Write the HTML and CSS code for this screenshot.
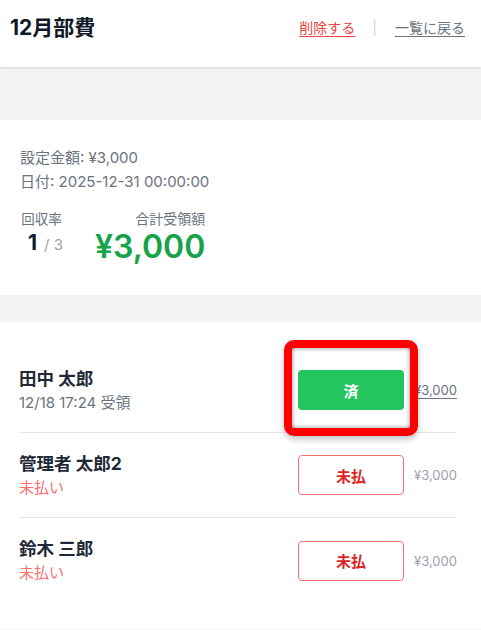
FILE: index.html
```html
<!DOCTYPE html>
<html lang="ja">
<head>
<meta charset="utf-8">
<title>12月部費</title>
<link rel="stylesheet" href="styles.css">
</head>
<body>
<header class="header">
  <h1 class="title">12月部費</h1>
  <nav class="links">
    <a class="link link-danger" href="#">削除する</a>
    <span class="sep">|</span>
    <a class="link link-muted" href="#">一覧に戻る</a>
  </nav>
</header>
<div class="spacer"></div>
<section class="card summary">
  <p class="meta">設定金額: ¥3,000</p>
  <p class="meta">日付: 2025-12-31 00:00:00</p>
  <div class="stats">
    <div class="stat stat-rate">
      <div class="stat-label">回収率</div>
      <div class="rate"><span class="rate-num">1</span><span class="rate-den">/ 3</span></div>
    </div>
    <div class="stat stat-total">
      <div class="stat-label stat-label-wide">合計受領額</div>
      <div class="total">¥3,000</div>
    </div>
  </div>
</section>
<section class="card list">
  <div class="row">
    <div class="person">
      <div class="name">田中 太郎</div>
      <div class="status">12/18 17:24 受領</div>
    </div>
    <button class="btn btn-paid">済</button>
    <span class="amount amount-paid">¥3,000</span>
    <div class="highlight"></div>
  </div>
  <div class="row">
    <div class="person">
      <div class="name">管理者 太郎2</div>
      <div class="status status-unpaid">未払い</div>
    </div>
    <button class="btn btn-unpaid">未払</button>
    <span class="amount">¥3,000</span>
  </div>
  <div class="row">
    <div class="person">
      <div class="name">鈴木 三郎</div>
      <div class="status status-unpaid">未払い</div>
    </div>
    <button class="btn btn-unpaid">未払</button>
    <span class="amount">¥3,000</span>
  </div>
</section>
</body>
</html>
```
FILE: styles.css
```css
* { box-sizing: border-box; }
html, body { margin: 0; padding: 0; }
body {
  background: #f3f4f6;
  font-family: "Inter", "Noto Sans CJK JP", sans-serif;
  color: #1f2937;
  width: 481px;
  overflow: hidden;
}
.header {
  height: 67px;
  background: #fff;
  display: flex;
  justify-content: space-between;
  align-items: flex-start;
  padding: 14px 16px 0 10px;
  box-shadow: 0 1px 3px rgba(0,0,0,0.12);
  position: relative;
  z-index: 1;
}
.title {
  margin: 0;
  font-size: 21px;
  line-height: 28px;
  font-weight: 700;
  color: #111827;
}
.links {
  display: flex;
  align-items: center;
  font-size: 14px;
  line-height: 28px;
}
.link { text-decoration: underline; text-underline-offset: 3px; }
.link-danger { color: #ef4444; }
.link-muted { color: #6b7280; }
.sep { color: #d1d5db; margin: 0 18px 0 17px; }
.spacer { height: 53px; }
.card { background: #fff; }
.summary {
  height: 175px;
  padding: 26px 20px 0;
}
.meta {
  margin: 0;
  font-size: 15px;
  line-height: 24px;
  color: #6b7280;
}
.stats {
  display: flex;
  gap: 32px;
  margin-top: 17px;
}
.stat-label {
  font-size: 13.5px;
  line-height: 16px;
  color: #6b7280;
}
.stat-label-wide { font-size: 14px; }
.stat-rate { text-align: center; }
.rate { margin-top: 4px; line-height: 24px; padding-left: 8px; }
.rate-num { font-size: 21px; font-weight: 700; color: #111827; }
.rate-den { font-size: 15px; color: #9ca3af; margin-left: 7px; }
.stat-total { text-align: right; }
.total {
  font-size: 32px;
  line-height: 40px;
  font-weight: 600;
  color: #16a34a;
}
.list {
  margin-top: 27px;
  padding: 26px 25px 26px 19px;
}
.row {
  position: relative;
  height: 85px;
  display: flex;
  align-items: center;
  border-bottom: 1px solid #e5e7eb;
}
.row:last-child { border-bottom: none; }
.person { flex: 1; }
.name {
  font-size: 17.5px;
  line-height: 24px;
  font-weight: 700;
  color: #1f2937;
}
.status {
  font-size: 15px;
  line-height: 23px;
  color: #6b7280;
}
.status-unpaid { color: #f87171; }
.btn {
  width: 106px;
  height: 40px;
  border-radius: 4px;
  font-family: inherit;
  font-size: 15px;
  font-weight: 700;
  border: 1px solid transparent;
  padding: 0;
}
.btn-paid { background: #22c55e; color: #fff; }
.btn-unpaid { background: #fff; color: #dc2626; border-color: #f87171; }
.amount {
  margin-left: 10px;
  width: 42px;
  font-size: 13px;
  color: #9ca3af;
  text-align: right;
  white-space: nowrap;
}
.amount-paid { color: #6b7280; text-decoration: underline; text-underline-offset: 3px; }
.highlight {
  position: absolute;
  left: 265px;
  top: -8px;
  width: 134px;
  height: 96px;
  border: 8px solid #ff0000;
  border-radius: 10px;
  box-shadow: inset 0 0 5px rgba(0,0,0,0.45), 0 3px 6px rgba(0,0,0,0.25);
  pointer-events: none;
}
```
